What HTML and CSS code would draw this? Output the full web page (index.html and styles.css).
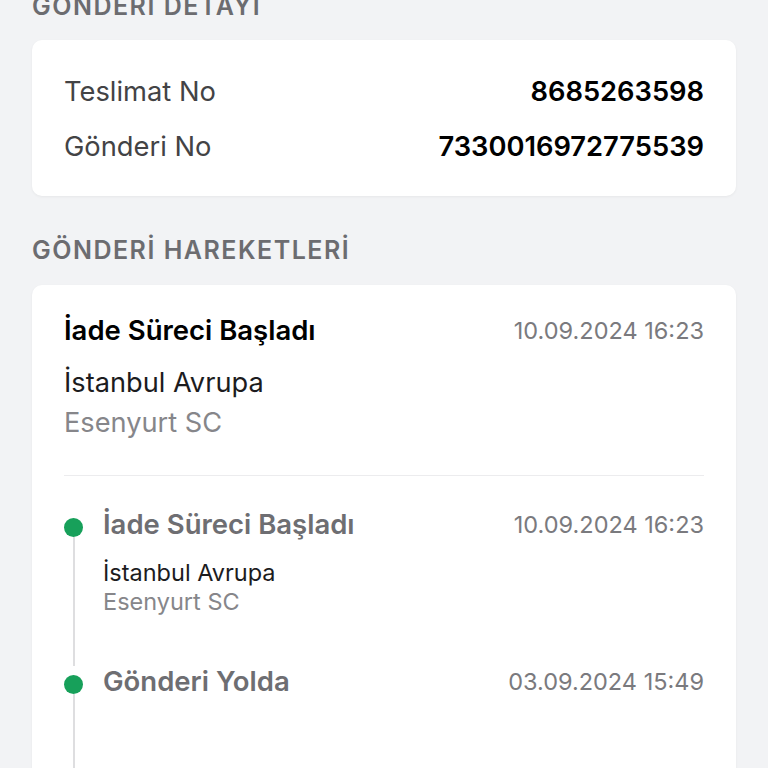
FILE: index.html
```html
<!DOCTYPE html>
<html lang="tr">
<head>
<meta charset="utf-8">
<link rel="stylesheet" href="styles.css">
</head>
<body>
<main class="page">
  <section class="section">
    <h2 class="heading">GÖNDERİ DETAYI</h2>
    <div class="card detail">
      <div class="row"><span class="label">Teslimat No</span><span class="value">8685263598</span></div>
      <div class="row"><span class="label">Gönderi No</span><span class="value">7330016972775539</span></div>
    </div>
  </section>
  <section class="section">
    <h2 class="heading">GÖNDERİ HAREKETLERİ</h2>
    <div class="card moves">
      <div class="current">
        <div class="current-top">
          <span class="current-title">İade Süreci Başladı</span>
          <span class="date">10.09.2024 16:23</span>
        </div>
        <div class="loc">İstanbul Avrupa</div>
        <div class="sub">Esenyurt SC</div>
      </div>
      <div class="timeline">
        <div class="item">
          <div class="rail"><span class="dot"></span><span class="line"></span></div>
          <div class="content">
            <div class="item-top">
              <span class="item-title">İade Süreci Başladı</span>
              <span class="date">10.09.2024 16:23</span>
            </div>
            <div class="item-loc">İstanbul Avrupa</div>
            <div class="item-sub">Esenyurt SC</div>
          </div>
        </div>
        <div class="item last">
          <div class="rail"><span class="dot"></span><span class="line"></span></div>
          <div class="content">
            <div class="item-top">
              <span class="item-title">Gönderi Yolda</span>
              <span class="date">03.09.2024 15:49</span>
            </div>
          </div>
        </div>
      </div>
    </div>
  </section>
</main>
</body>
</html>
```
FILE: styles.css
```css
* { box-sizing: border-box; }
html, body { margin: 0; padding: 0; }
body {
  background: #f2f3f5;
  font-family: Inter, "Noto Sans", "Liberation Sans", sans-serif;
  color: #000;
  overflow: hidden;
  height: 768px;
}
.page {
  margin-top: -9px;
  padding: 0 32px;
  display: flex;
  flex-direction: column;
  gap: 39px;
}
.heading {
  margin: 0 0 19px;
  font-size: 25px;
  line-height: 30px;
  font-weight: 600;
  color: #6c6c70;
  letter-spacing: 1.5px;
}
.section:nth-child(2) .heading { margin-bottom: 20px; }
.card {
  background: #fff;
  border-radius: 10px;
  box-shadow: 0 1px 3px rgba(0,0,0,0.05);
}
.detail {
  padding: 24px 32px 22px;
}
.row {
  display: flex;
  justify-content: space-between;
  align-items: center;
  height: 55px;
}
.label {
  font-size: 27.3px;
  color: #434345;
}
.value {
  font-size: 27.3px;
  font-weight: 600;
  color: #000;
}
.moves {
  padding: 30px 32px 0;
  min-height: 520px;
}
.current {
  padding-bottom: 32px;
  border-bottom: 1px solid #ececee;
}
.current-top, .item-top {
  display: flex;
  justify-content: space-between;
  align-items: center;
  height: 30px;
}
.current-title {
  font-size: 27.5px;
  font-weight: 600;
  color: #000;
}
.date {
  font-size: 23.5px;
  color: #7a7a7e;
}
.loc {
  margin-top: 18px;
  font-size: 27.2px;
  line-height: 40px;
  color: #1c1c1e;
}
.sub {
  font-size: 27.2px;
  line-height: 40px;
  color: #86868a;
}
.timeline {
  padding-top: 33px;
}
.item {
  display: grid;
  grid-template-columns: 39px 1fr;
}
.rail {
  display: flex;
  flex-direction: column;
  align-items: flex-start;
}
.dot {
  margin-top: 8.5px;
  width: 19px;
  height: 19px;
  border-radius: 50%;
  background: #17a05a;
  flex: none;
}
.line {
  flex: 1;
  width: 2px;
  margin-left: 8.5px;
  background: #dedee0;
}
.content {
  padding-bottom: 50px;
}
.item.last .content { min-height: 130px; }
.item-title {
  font-size: 27.5px;
  font-weight: 600;
  color: #6e6e72;
}
.item-loc {
  margin-top: 19px;
  font-size: 23.5px;
  line-height: 29px;
  color: #1c1c1e;
}
.item-sub {
  font-size: 23.5px;
  line-height: 29px;
  color: #86868a;
}
```
